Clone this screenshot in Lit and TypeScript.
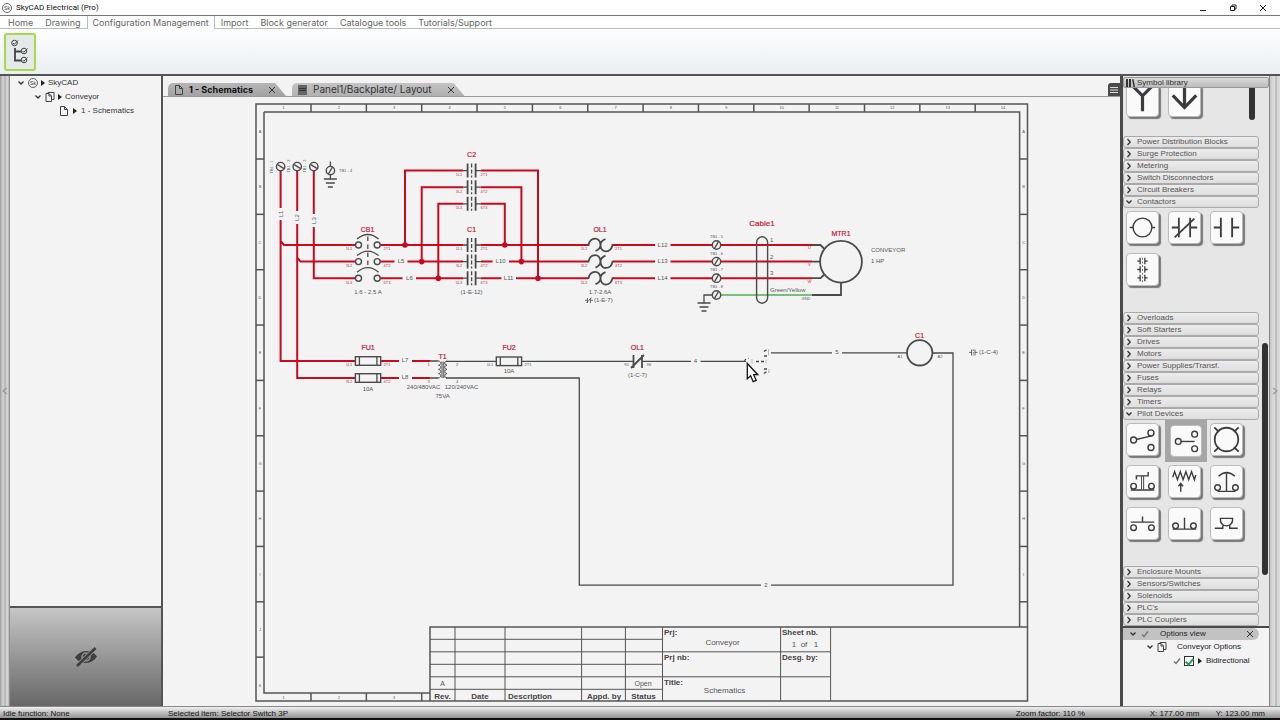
import { LitElement, html, css, svg } from "lit";
import { customElement, state } from "lit/decorators.js";
import { classMap } from "lit/directives/class-map.js";

type Pt = { x: number; y: number };

const txt = (x: number, y: number, s: string, cls = "", anchor = "middle") =>
  svg`<text x=${x} y=${y} class=${cls} text-anchor=${anchor}>${s}</text>`;
const vtxt = (x: number, y: number, s: string, cls = "") =>
  svg`<text x=${x} y=${y} class=${cls} text-anchor="middle" transform=${`rotate(-90 ${x} ${y})`}>${s}</text>`;
const wire = (d: string) => svg`<path class="wire" d=${d} />`;
const ink = (d: string) => svg`<path class="ink" d=${d} />`;
const node = (x: number, y: number) => svg`<circle class="node" cx=${x} cy=${y} r="2.8" />`;

const POLES = [245, 261.6, 278.2];
const COLS = Array.from({ length: 13 }, (_, i) => 311 + i * 55.35);
const ROWS = Array.from({ length: 10 }, (_, i) => 159 + i * 55.35);

const terminal = (p: Pt, flat = false) => svg`
  <circle class="part" cx=${p.x} cy=${p.y} r="4.2" />
  <path class="ink" d=${flat ? `M${p.x - 3} ${p.y - 2}L${p.x + 3.4} ${p.y + 2}` : `M${p.x - 2} ${p.y + 3.4}L${p.x + 2} ${p.y - 3.4}`} />`;

const ground = (x: number, y: number) =>
  ink(`M${x - 6.5} ${y}h13M${x - 4.5} ${y + 4}h9M${x - 2.5} ${y + 8}h5`);

const contact = (y: number, n: number) => svg`
  ${ink(`M463 ${y}h5M476 ${y}h5`)}
  <path class="plate" d=${`M467.6 ${y - 7}v14M475.6 ${y - 7}v14`} />
  <path class="ink" stroke-dasharray="4 2" d=${`M471.6 ${y - 7}v14`} />
  ${txt(459, y + 5.4, `${n * 2 - 1}L${n}`, "pin redpin")}
  ${txt(484, y + 5.4, `${n * 2}T${n}`, "pin redpin")}`;

const overload = (y: number, n: number) => svg`
  <path class="plate" d=${`M587.5 ${y}h1C590 ${y - 8} 600.3 ${y - 9} 600.5 ${y}C600.5 ${y + 3} 598 ${y + 5} 595.5 ${y + 6}M613.5 ${y}h-1C611 ${y + 8} 600.7 ${y + 9} 600.5 ${y}C600.5 ${y - 3} 603 ${y - 5} 605.5 ${y - 6}`} />
  ${txt(584, y + 5.4, `${n * 2 - 1}L${n}`, "pin redpin")}
  ${txt(618.5, y + 5.4, `${n * 2}T${n}`, "pin redpin")}`;

const fuse = (x: number, y: number) => svg`
  <rect class="part" x=${x} y=${y - 4.3} width="25.3" height="8.6" />
  ${ink(`M${x + 4} ${y - 4}v8M${x + 21.5} ${y - 4}v8`)}`;

const frame = svg`
  <path class="frame" d="M256 104H1027.5V701H256ZM264 112H1019.6V627M264 112V693H430" />
  ${COLS.map((x) => svg`<path class="frame" d=${`M${x} 104v8`} />`)}
  ${COLS.slice(0, 3).map((x) => svg`<path class="frame" d=${`M${x} 693v8`} />`)}
  ${ROWS.map((y) => svg`<path class="frame" d=${`M256 ${y}h8`} />`)}
  ${ROWS.slice(0, 9).map((y) => svg`<path class="frame" d=${`M1019.6 ${y}h8`} />`)}
  ${Array.from({ length: 14 }, (_, i) => txt(283.5 + i * 55.35, 109.4, String(i + 1), "grid"))}
  ${Array.from({ length: 3 }, (_, i) => txt(283.5 + i * 55.35, 698.6, String(i + 1), "grid"))}
  ${Array.from("ABCDEFGHIJK").map((c, i) => txt(260, 133 + i * 55.35, c, "grid"))}
  ${Array.from("ABCDEFGHI").map((c, i) => txt(1023.6, 133 + i * 55.35, c, "grid"))}`;

const titleBlock = svg`
  <path class="frame" d="M430 701V627H1027.5" />
  <path class="rule" d="M430 639.3H662.5M430 664.3H662.5M430 689.3H662.5M430 651.8H830.5M430 676.8H830.5M455 627V701M505 627V701M581.6 627V701M625.4 627V701M662.5 627V701M780.6 627V701M830.6 627V701" />
  ${txt(442.5, 686, "A", "cell")} ${txt(643, 686, "Open", "cell")}
  ${txt(442.5, 699, "Rev.", "label")} ${txt(480, 699, "Date", "label")}
  ${txt(508, 699, "Description", "label", "start")} ${txt(604, 699, "Appd. by", "label")}
  ${txt(643.5, 699, "Status", "label")}
  ${txt(664, 635, "Prj:", "label", "start")} ${txt(722.5, 645, "Conveyor", "cellL")}
  ${txt(664, 660, "Prj nb:", "label", "start")}
  ${txt(664, 685, "Title:", "label", "start")} ${txt(724.5, 693, "Schematics", "cellL")}
  ${txt(782, 635, "Sheet nb.", "label", "start")} 
  ${txt(794, 647, "1", "cellL")}${txt(804, 647, "of", "cellL")}${txt(816, 647, "1", "cellL")}
  ${txt(782, 660, "Desg. by:", "label", "start")}`;

const power = svg`
  ${wire("M280.6 171V208M280.6 220V361H355M280.6 241L284 245H355")}
  ${wire("M297.2 171V211M297.2 224V378H355M297.2 257.6L300.6 261.6H355")}
  ${wire("M313.8 171V214M313.8 227V278.2H355")}
  ${[280.6, 297.2, 313.8].map((x) => terminal({ x, y: 166.6 }, true))}
  ${vtxt(273, 167, "TB1 - 1", "pin")} ${vtxt(289.6, 166, "TB1 - 2", "pin")} ${vtxt(306.2, 166, "TB1 - 3", "pin")}
  ${vtxt(282.5, 214, "L1", "lbl")} ${vtxt(299, 217.6, "L2", "lbl")} ${vtxt(315.6, 220.6, "L3", "lbl")}
  ${ink("M330.4 161.5v18")} ${terminal({ x: 330.4, y: 170.6 })} ${ground(330.4, 179)}
  ${txt(339, 172, "TB1 - 4", "pin", "start")}

  ${wire("M380 245H463M380 261.6H394.5M407.5 261.6H463M380 278.2H402.5M416 278.2H463")}
  ${POLES.map((y, i) => svg`
    <circle class="part" cx="358.5" cy=${y} r="3" /><circle class="part" cx="377.2" cy=${y} r="3" />
    ${ink(`M357 ${y - 6}Q367.8 ${y - 15} 378.6 ${y - 6}`)}
    ${txt(349, y + 5.4, `${i * 2 + 1}L${i + 1}`, "pin redpin")}${txt(387, y + 5.4, `${i * 2 + 2}T${i + 1}`, "pin redpin")}`)}
  <path class="ink" stroke-dasharray="4.5 3.5" d="M367.8 236.5V268" />
  ${txt(367.6, 232, "CB1", "tag")} ${txt(368, 294, "1.6 - 2.5 A", "note")}
  ${txt(401, 263.4, "L5", "lbl")} ${txt(409.4, 280, "L6", "lbl")}

  ${wire("M405 245V170.6H463M421.7 261.6V187.2H463M438.3 278.2V203.8H463")}
  ${wire("M481 170.6H538V278.2M481 187.2H521.4V261.6M481 203.8H504.8V245")}
  ${node(405, 245)} ${node(421.7, 261.6)} ${node(438.3, 278.2)}
  ${node(504.8, 245)} ${node(521.4, 261.6)} ${node(538, 278.2)}
  ${wire("M481 245H588M481 261.6H492.6M509 261.6H588M481 278.2H501.4M516 278.2H588")}
  ${[170.6, 187.2, 203.8].map((y, i) => contact(y, i + 1))}
  ${POLES.map((y, i) => contact(y, i + 1))}
  ${txt(471.6, 157.4, "C2", "tag")} ${txt(471.6, 232, "C1", "tag")} ${txt(471.6, 294, "(1-E-12)", "note")}
  ${txt(500.6, 263.4, "L10", "lbl")} ${txt(508.6, 280, "L11", "lbl")}

  ${POLES.map((y, i) => overload(y, i + 1))}
  ${txt(600, 232, "OL1", "tag")} ${txt(600, 294, "1.7-2.6A", "note")} ${txt(594, 302.4, "(1-E-7)", "note", "start")}
  <path class="thin" d="M585 300.3h2.500M587.500 298v5M590.500 298v5M586.500 303L591.500 297.600M590.500 300.300h2.500" />

  ${POLES.map((y, i) => svg`
    ${wire(`M613 ${y}H655M670.5 ${y}H712M721 ${y}H812`)}
    ${txt(662.6, y + 1.6, `L1${i + 2}`, "lbl")}
    ${txt(770, y - 3, String(i + 1), "lbl", "start")}
    ${txt(809.4, y + 4.4, "UVW"[i], "pin redpin")}`)}
  <path class="earth" d="M721 295H812" />
  ${[...POLES, 295].map((y, i) => svg`${terminal({ x: 716.5, y })}${txt(716.5, y - 7, `TB1 - ${i + 5}`, "pin")}`)}
  ${ink("M712 295H704V303")} ${ground(704, 303)}
  <rect class="part open" x="756.6" y="236.8" width="11" height="66.4" rx="5.5" />
  ${txt(762, 226, "Cable1", "tagL")} ${txt(770, 292, "Green/Yellow", "lbl", "start")} ${txt(806, 299.6, "GND", "pin")}
  <path class="plate" d="M812 245H820.5L825 249.5M812 261.6H820M812 278.2H820.5L825 274M812 295H841V283" />
  <circle class="part heavy" cx="841" cy="261.7" r="20.9" />
  ${txt(841, 236, "MTR1", "tag")}
  ${txt(871, 252.4, "CONVEYOR", "note", "start")} ${txt(871, 263, "1 HP", "note", "start")}`;

const control = svg`
  ${fuse(355.4, 361)} ${fuse(355.4, 378)}
  ${wire("M381 361H399M412 361H430M381 378H399M412 378H430")}
  ${txt(368, 350, "FU1", "tag")} ${txt(368, 391.4, "10A", "note")}
  ${txt(405, 362.4, "L7", "lbl")} ${txt(405, 379.2, "L8", "lbl")}
  ${txt(349, 366.4, "1L1", "pin redpin")}${txt(387, 366.4, "2T1", "pin redpin")}
  ${txt(349, 383.4, "3L2", "pin redpin")}${txt(387, 383.4, "4T2", "pin redpin")}
  ${ink("M430 361H438.500M430 378H438.500")}
  <path class="coil" d="M438.500 361c3 .5 3 3.700 0 4.200c3 .5 3 3.700 0 4.200c3 .5 3 3.700 0 4.200c3 .5 3 3.900 0 4.400M447 361c-3 .5-3 3.700 0 4.200c-3 .5-3 3.700 0 4.200c-3 .5-3 3.700 0 4.200c-3 .5-3 3.900 0 4.400M442 361.500V378M443.800 361.500V378" />
  ${txt(442.6, 358.6, "T1", "tag")}
  ${txt(428.5, 366.4, "1", "pin redpin")}${txt(428.5, 383.4, "3", "pin redpin")}${txt(457, 366.4, "2", "pin")}${txt(457, 383.4, "4", "pin")}
  ${txt(423.5, 389.4, "240/480VAC", "note")} ${txt(461.5, 389.4, "120/240VAC", "note")} ${txt(442.6, 398, "75VA", "note")}
  ${ink("M446 361.300H496M521.500 361.300H633M642 361.300H691M700.500 361.300H746")}
  ${fuse(496.3, 361.3)} ${txt(509, 350, "FU2", "tag")} ${txt(509, 373, "10A", "note")}
  ${txt(490, 366.4, "1L1", "pin")}${txt(528, 366.4, "2T1", "pin")}
  <path class="plate" d="M633.500 355V368M642 355V368M631 368L644 355" />
  ${txt(637.4, 350, "OL1", "tag")} ${txt(637.4, 377, "(1-C-7)", "note")}
  ${txt(626.5, 366.4, "95", "pin")}${txt(649, 366.4, "96", "pin")}
  ${txt(695.5, 362.6, "4", "lbl")} ${txt(837, 354.4, "5", "lbl")} ${txt(766, 586.8, "2", "lbl")}
  ${ink("M446 378H579.300V585.200H761M771 585.200H953V353H932M771 352.800H832M842 352.800H907")}
  <circle class="part heavy" cx="919.7" cy="352.800" r="12.700" />
  ${txt(919.6, 338, "C1", "tag")} ${txt(900, 358, "A1", "pin")}${txt(940, 358, "A2", "pin")}
  <path class="thin" d="M969 352.400h2.500M971.500 349.500v6M975 349.500v6M975 352.400h2.500" />
  <path class="thin" stroke-dasharray="1.5 1" d="M973.300 349.500v6" />
  ${txt(979, 354.4, "(1-C-4)", "note", "start")}
  <path class="ink" stroke-dasharray="3 2" d="M744.500 361.500q.5-3 4-3M756 361.500h10M764 351.500q2-2 5-1.500M764 356h5M764 369h5M764 373.500q2-2 5-1.500" />
  <path class="ghost" d="M752 359v5M768.500 350.500v5M766 359.500v4M769 369v4" />`;

const cursor = svg`<path d="M747.300 363.500V378.800L750.600 375.800L753.200 381.700L756.200 380.400L753.700 374.700H757.800Z" fill="#fff" stroke="#111" stroke-width="1.300" />`;

const SYMBOLS: Record<string, unknown> = {
  fork: svg`<path stroke-width="3.400" d="M5 0L16.500 11.500L28 0M16.500 11V28" />`,
  arrow: svg`<path stroke-width="3.400" d="M16.500 3V25M4 11L16.500 24L29 11" />`,
  coil: svg`<circle cx="16.500" cy="16.500" r="10" /><path d="M3 16.500h3.500M26.500 16.500h3.500" />`,
  nc: svg`<path d="M3 16.500h7.500M22.500 16.500h7.500M10.500 6v21M22.500 6v21" stroke-width="1.900" /><path d="M6 27L27 7" stroke-width="1.900" />`,
  no: svg`<path d="M3 16.500h7.500M22.500 16.500h7.500M10.500 6v21M22.500 6v21" stroke-width="2" />`,
  pole3: svg`<path d="M11 7.500h3.500M18.500 7.500h3.500M11 16.500h3.500M18.500 16.500h3.500M11 25.500h3.500M18.500 25.500h3.500M14 4v7M19 4v7M14 13v7M19 13v7M14 22v7M19 22v7" stroke-width="1.400" /><path d="M16.500 4v26" stroke-width=".8" stroke-dasharray="2 2" />`,
  sel2: svg`<circle cx="7" cy="17" r="3.200" /><circle cx="25.500" cy="9.500" r="3.200" /><circle cx="25.500" cy="25" r="3.200" /><path d="M10 16.500L26 12.700" />`,
  sel3: svg`<circle cx="8" cy="17" r="3.200" /><circle cx="26" cy="9" r="3.200" /><circle cx="26" cy="25" r="3.200" /><path d="M11 17h15" />`,
  pilot: svg`<circle cx="16.500" cy="16.500" r="12.500" stroke-width="1.900" /><path stroke-width="1.900" d="M3.500 3.500l5 5M29.500 3.500l-5 5M3.500 29.500l5-5M29.500 29.500l-5-5" />`,
  plug: svg`<circle cx="7" cy="21.500" r="3" /><circle cx="26" cy="21.500" r="3" /><path d="M4 25.500h25M10 14.500v-4h12.500V6.500" /><path d="M15.500 25V10.500M17.700 25V10.500" stroke-width="1" />`,
  resistor: svg`<path d="M4 12l2-6 3 8.500 3-8.500 3 8.500 3-8.500 3 8.500 3-8.500 3 8.500 1.500-5M12.500 27.500V19M10 21.500l2.500-3 2.500 3" />`,
  mushroom: svg`<circle cx="7" cy="23" r="3" /><circle cx="26" cy="23" r="3" /><path d="M7 27h19M16.500 27V7M8 11Q16.500 3 25.500 11" />`,
  pushno: svg`<circle cx="7" cy="21" r="3" /><circle cx="26" cy="21" r="3" /><path d="M4 15h25M16.500 15V9" />`,
  pushnc: svg`<circle cx="7" cy="19" r="3" /><circle cx="26" cy="19" r="3" /><path d="M4 22.500h25M16.500 22V10.500" />`,
  horn: svg`<path d="M4 21.500h8.500v-3M28.500 21.500H20v-3M10 11h13q.5 7.500-6.500 8q-7-.5-6.500-8z" />`,
};

interface Group { name: string; items?: string[] }
const GROUPS: Group[] = [
  { name: "Power Distribution Blocks" }, { name: "Surge Protection" }, { name: "Metering" },
  { name: "Switch Disconnectors" }, { name: "Circuit Breakers" },
  { name: "Contactors", items: ["coil", "nc", "no", "pole3"] },
  { name: "Overloads" }, { name: "Soft Starters" }, { name: "Drives" }, { name: "Motors" },
  { name: "Power Supplies/Transf." }, { name: "Fuses" }, { name: "Relays" }, { name: "Timers" },
  { name: "Pilot Devices", items: ["sel2", "sel3", "pilot", "plug", "resistor", "mushroom", "pushno", "pushnc", "horn"] },
  { name: "Enclosure Mounts" }, { name: "Sensors/Switches" }, { name: "Solenoids" },
  { name: "PLC's" }, { name: "PLC Couplers" },
];

const chevron = (open: boolean) => html`<svg class="ico8" viewBox="0 0 8 8">
  <path d=${open ? "M1.500 2.500L4 5L6.500 2.500" : "M2.500 1L5.200 4L2.500 7"} fill="none" stroke="#333" stroke-width="1.300" /></svg>`;
const caret = html`<svg class="ico4" viewBox="0 0 4 8"><path d="M0 1L4 4L0 7Z" fill="#222" /></svg>`;
const page = html`<svg class="ico10" viewBox="0 0 10 10"><path d="M1.500 .5H5.500L8.500 3.500V9.500H1.500ZM5.500 .5V3.500H8.500" fill="none" stroke="#444" /></svg>`;
const pages = html`<svg class="ico10" viewBox="0 0 10 10"><path d="M3 1.500V.5H9V7.500H7M1 1.500H4L6.500 4V9.500H1ZM4 1.500V4H6.500" fill="none" stroke="#444" /></svg>`;
const logo = html`<svg class="ico10" viewBox="0 0 10 10"><circle cx="5" cy="5" r="4.500" fill="none" stroke="#555" stroke-width=".9" /><text x="5" y="6.800" text-anchor="middle" font-size="5" font-family="Liberation Sans, sans-serif" fill="#333">Sk</text></svg>`;
const cross = html`<svg class="ico8" viewBox="0 0 8 8"><path d="M1 1L7 7M7 1L1 7" stroke="#333" fill="none" /></svg>`;
const tick = html`<svg class="ico8" viewBox="0 0 8 8"><path d="M1 4.500L3 6.500L7 1.500" stroke="#777" stroke-width="1.500" fill="none" /></svg>`;

@customElement("app-root")
export class AppRoot extends LitElement {
  @state() private ribbon = "Configuration Management";
  @state() private picked = "sel3";
  @state() private bidirectional = true;

  static styles = css`
    :host { display: flex; flex-direction: column; height: 100vh; overflow: hidden; background: #f3f3f3;
      font: 8px/12px "Liberation Sans", Arial, sans-serif; color: #222; }
    * { box-sizing: border-box; }
    button { font: inherit; color: inherit; border: 0; background: none; padding: 0; margin: 0; text-align: left; }
    svg { display: block; flex: none; }
    .ico8 { width: 8px; height: 8px; }
    .ico4 { width: 4px; height: 8px; }
    .ico10 { width: 10px; height: 10px; }

    .title { display: flex; align-items: center; gap: 4px; height: 15px; padding: 0 2px; background: #fff; font-family: Roboto, "Noto Sans", sans-serif; }
    .title h1 { flex: 1; margin: 0; font: inherit; color: #111; }
    .winbtns { display: flex; gap: 20px; padding-right: 10px; }
    .winbtns svg { width: 10px; height: 10px; }

    .menu { display: flex; height: 14px; border-top: 1px solid #777; background: #fff; border-bottom: 1px solid #bbb;
      font: 9px/13px Inter, "Liberation Sans", sans-serif; color: #666; padding-left: 2px; }
    .menu button { padding: 0 5px; height: 13px; border: solid transparent; border-width: 0 1px; white-space: nowrap; }
    .menu .on { border-color: #bbb; background: #fdfdfd; }
    .ribbon { flex: none; height: 47px; padding: 4px; background: linear-gradient(#fdfefe, #eaeff3); border-bottom: 2px solid #555; }
    .config { display: grid; place-items: center; width: 32px; height: 38px; border: 2px solid #a9d84a; border-radius: 3px; background: #e4e9ea; }
    .config svg { width: 18px; height: 26px; }

    .work { flex: 1; min-height: 0; display: flex; }
    .rail { flex: none; width: 10px; display: grid; place-items: center; background: linear-gradient(90deg, #9a9a9a, #c8c8c8 2px, #d2d2d2 4px, #a4a4a4 5px, #cdcdcd 6px, #d6d6d6 8px, #777 10px); }
    .rail.end { background: linear-gradient(90deg, #c4c4c4, #dadada 3px, #dadada 5px, #a4a4a4 6px, #d6d6d6 7px, #dcdcdc); }
    .rail svg { width: 6px; height: 8px; }

    .left { flex: none; width: 153px; display: flex; flex-direction: column; border-right: 2px solid #555; background: #f3f3f3; }
    .tree { flex: 1; list-style: none; margin: 0; padding: 0 0 0 7px; color: #333; }
    .tree li { height: 14px; }
    .row { display: flex; align-items: center; gap: 3px; height: 14px; }
    .kids { list-style: none; margin: 0; padding-left: 17px; }
    .kids .kids { padding-left: 25px; }
    .row.leaf { gap: 4px; }
    .preview { height: 100px; border-top: 2px solid #555; background: linear-gradient(#c6c6c6, #676767); display: grid; place-items: center; }
    .preview svg { width: 24px; height: 22px; }

    .center { flex: 1; min-width: 0; display: flex; flex-direction: column; }
    .docs { flex: none; display: flex; align-items: flex-end; gap: 6px; height: 21px; padding-left: 5px; border-bottom: 1px solid #999; }
    .doc { display: flex; align-items: center; height: 13px; padding: 0 10px 0 6px; gap: 5px; white-space: nowrap;
      font: 10px/13px Inter, "Liberation Sans", sans-serif; color: #333;
      background: linear-gradient(#c4c4c4, #b0b0b0); border-radius: 5px 0 0 0; clip-path: polygon(0 0, calc(100% - 11px) 0, 100% 100%, 0 100%); }
    .doc button { margin-left: 10px; }
    .doc.on { font: 700 9px/13px Inter, "Liberation Sans", sans-serif; color: #111; background: linear-gradient(#b6b6b6, #a2a2a2); }
    .spacer { flex: 1; }
    .burger { width: 12px; height: 13px; background: #4a4a4a; border-radius: 3px 0 0 0; display: grid; place-items: center; }
    .burger svg { width: 8px; height: 8px; }
    .sheet { flex: 1; min-height: 0; width: 100%; background: #f3f3f3; }

    .sheet text { font-family: "Liberation Sans", Arial, sans-serif; fill: #555; }
    .sheet .grid { font-size: 4px; }
    .sheet .pin { font-size: 4px; }
    .sheet .redpin { fill: #a83a48; }
    .sheet .lbl { font-size: 6px; }
    .sheet .note { font-size: 6px; }
    .sheet .tag { font-size: 7px; fill: #c41a34; stroke: #c41a34; stroke-width: .2px; }
    .sheet .tagL { font-size: 8px; fill: #c41a34; stroke: #c41a34; stroke-width: .2px; }
    .sheet .cell { font-size: 7px; }
    .sheet .cellL { font-size: 8px; }
    .sheet .label { font-size: 8px; font-weight: 700; fill: #444; }
    .frame { fill: none; stroke: #555; stroke-width: 1.5; }
    .rule { fill: none; stroke: #555; stroke-width: 1; }
    .wire { fill: none; stroke: #c80a20; stroke-width: 2; }
    .earth { fill: none; stroke: #4caf50; stroke-width: 1.6; }
    .node { fill: #c80a20; }
    .ink { fill: none; stroke: #4a4a4a; stroke-width: 1.3; }
    .coil { fill: none; stroke: #4a4a4a; stroke-width: 1; }
    .thin { fill: none; stroke: #4a4a4a; stroke-width: .8; }
    .ghost { fill: none; stroke: #bbb; stroke-width: 1; }
    .plate { fill: none; stroke: #4a4a4a; stroke-width: 1.8; }
    .part { fill: #f3f3f3; stroke: #4a4a4a; stroke-width: 1.4; }
    .open { fill: none; }
    .heavy { stroke-width: 1.8; }

    .right { flex: none; width: 150px; display: flex; flex-direction: column; border-left: 3px solid #4a4a4a; border-right: 1px solid #888; background: #e6e6e6; }
    .lib { flex: 1; min-height: 0; display: flex; flex-direction: column; padding-top: 1px; }
    .lib h2 { display: flex; align-items: center; gap: 2px; flex: none; margin: 0; height: 11px; padding-left: 1px; font: inherit; color: #333;
      background: linear-gradient(#dadada, #bdbdbd); border: 1px solid #999; border-radius: 2px; }
    .scroll { flex: 1; min-height: 0; display: flex; }
    .groups { flex: 1; overflow: hidden; display: flex; flex-direction: column; justify-content: flex-end; }
    .head { flex: none; display: flex; align-items: center; gap: 4px; width: 100%; height: 12px; padding-left: 1px; color: #555;
      border: 1px solid #aaa; border-radius: 3px; background: linear-gradient(#ececec, #dedede); }
    .tiles { flex: none; display: grid; grid-template-columns: repeat(3, 42px); padding-bottom: 20px; }
    .first { display: flex; justify-content: space-between; padding: 0 4px 13px 0; }
    .first .tiles { padding: 0; grid-template-columns: repeat(2, 42px); }
    .slot { height: 42px; display: flex; padding: 3px 0 0 3px; }
    .slot.on { background: #a6a6a6; padding: 5px; }
    .slot.on .tile { box-shadow: none; width: 32px; height: 32px; }
    .tile { width: 33px; height: 33px; border: 1px solid #bbb; border-radius: 4px; background: #fafafa; box-shadow: 2px 2px 1px #777; }
    .tile svg { width: 100%; height: 100%; fill: none; stroke: #3c3c3c; stroke-width: 1.5; }
    .mini { width: 6px; background: #333; border-radius: 3px; margin-bottom: 3px; }
    .track { flex: none; width: 10px; padding: 255px 1px 51px 3px; }
    .thumb { height: 100%; background: #333; border-radius: 3px; }
    .options { flex: none; height: 80px; border-top: 2px solid #4a4a4a; background: #f3f3f3; color: #222; }
    .optbar { display: flex; align-items: center; gap: 4px; height: 12px; width: 136px; padding: 0 5px 0 6px; border-radius: 0 6px 6px 0; background: #c2c2c2; }
    .optbar span { flex: 1; padding-left: 7px; }
    .optrow { display: flex; align-items: center; gap: 3px; height: 14px; padding-left: 23px; }
    .optrow span { padding-left: 7px; }
    .optrow.deep { padding-left: 50px; }
    .optrow label { display: flex; align-items: center; gap: 4px; }
    input { appearance: none; width: 10px; height: 10px; margin: 0; border: 1px solid #333; background: #fff; display: grid; place-items: center; }
    input:checked::after { content: ""; width: 3px; height: 6px; margin-bottom: 2px; border: solid #1fa04a; border-width: 0 2px 2px 0; transform: rotate(40deg); }

    .status { flex: none; display: flex; height: 14px; line-height: 13px; padding: 0 15px 0 3px; border-top: 1px solid #888; border-bottom: 2px solid #111;
      background: linear-gradient(#f0f0f0, #929292); color: #111; }
    .status span:nth-child(1) { width: 165px; }
    .status span:nth-child(2) { flex: 1; }
    .status span:nth-child(3) { width: 134px; }
    .status span:nth-child(4) { width: 66px; }
  `;

  private tile(id: string) {
    return html`<div class=${classMap({ slot: true, on: id === this.picked })}>
      <button class="tile" aria-label=${id} @click=${() => (this.picked = id)}><svg viewBox="0 0 33 33">${SYMBOLS[id]}</svg></button>
    </div>`;
  }

  render() {
    const menus = ["Home", "Drawing", "Configuration Management", "Import", "Block generator", "Catalogue tools", "Tutorials/Support"];
    return html`
      <header class="title">${logo}<h1>SkyCAD Electrical (Pro)</h1>
        <div class="winbtns">
          <button aria-label="Minimize"><svg viewBox="0 0 10 10"><path d="M2 7.500h6" stroke="#222" /></svg></button>
          <button aria-label="Restore"><svg viewBox="0 0 10 10"><path d="M2.500 3.500h4v4h-4zM4 3.500v-1.500h4v4h-1.500" stroke="#222" fill="none" /></svg></button>
          <button aria-label="Close"><svg viewBox="0 0 10 10"><path d="M2 2l6 6M8 2l-6 6" stroke="#222" /></svg></button>
        </div>
      </header>
      <nav class="menu">${menus.map((m) => html`<button class=${classMap({ on: m === this.ribbon })} @click=${() => (this.ribbon = m)}>${m}</button>`)}</nav>
      <div class="ribbon"><button class="config" aria-label="Configuration tree"><svg viewBox="1 0 18 26">
        <g fill="none" stroke="#444"><circle cx="4.500" cy="4" r="2.800" /><circle cx="14" cy="12" r="2.800" /><circle cx="14" cy="21" r="2.800" />
        <path d="M3 4l1.300 1.300L8 1.500M12.500 12l1.300 1.300L17.500 9.500M12.500 21l1.300 1.300L17.500 18.500" />
        <path d="M5 9V21.500H11M5 12.500H11" stroke-width="1.800" /></g></svg></button></div>

      <main class="work">
        <div class="rail"><svg viewBox="0 0 6 8"><path d="M5 1L1 4L5 7" fill="none" stroke="#999" stroke-width="1.300" /></svg></div>
        <aside class="left">
          <ul class="tree">
            <li><div class="row">${chevron(true)}${logo}${caret}<span>SkyCAD</span></div>
              <ul class="kids"><li><div class="row">${chevron(true)}${pages}${caret}<span>Conveyor</span></div>
                <ul class="kids"><li><div class="row leaf">${page}${caret}<span>1 - Schematics</span></div></li></ul>
              </li></ul>
            </li>
          </ul>
          <div class="preview"><svg viewBox="0 0 24 22"><path d="M1 11.500Q5 5.500 12 5Q19 5 23 10.500Q19 16.500 12 17Q5 17 1 11.500Z" fill="#3e3e3e" />
            <circle cx="12" cy="11" r="4" fill="none" stroke="#949494" stroke-width="1.500" /><path d="M5 18L20 3.500" stroke="#949494" stroke-width="4.500" /><path d="M3 20L21.500 2" stroke="#3e3e3e" stroke-width="2.600" /></svg></div>
        </aside>

        <section class="center">
          <div class="docs">
            <div class="doc on">${page}<span>1 - Schematics</span><button aria-label="Close 1 - Schematics">${cross}</button></div>
            <div class="doc"><svg class="ico10" viewBox="0 0 10 10"><path d="M0 0H9V10H0Z" fill="#666" /><path d="M1 3.500H8M1 5.500H8" stroke="#333" /></svg>
              <span>Panel1/Backplate/ Layout</span><button aria-label="Close Panel1">${cross}</button></div>
            <span class="spacer"></span>
            <button class="burger" aria-label="Sheet list"><svg viewBox="0 0 8 8"><path d="M0 1.500H8M0 4H8M0 6.500H8" stroke="#ddd" /></svg></button>
          </div>
          <svg class="sheet" viewBox="163 97 957 609" preserveAspectRatio="xMidYMin meet">${frame}${titleBlock}${power}${control}${cursor}</svg>
        </section>

        <aside class="right">
          <section class="lib">
            <h2><svg class="ico10" viewBox="0 0 10 10"><path d="M1 1H3V9H1ZM4 1H6V9H4ZM7 1.500L8.500 1L10 9H8.500Z" fill="#333" /></svg>Symbol library</h2>
            <div class="scroll">
              <div class="groups">
                <div class="first"><div class="tiles">${this.tile("fork")}${this.tile("arrow")}</div><div class="mini"></div></div>
                ${GROUPS.map((g) => html`<button class="head">${chevron(!!g.items)}${g.name}</button>
                  ${g.items ? html`<div class="tiles">${g.items.map((id) => this.tile(id))}</div>` : null}`)}
              </div>
              <div class="track"><div class="thumb"></div></div>
            </div>
          </section>
          <section class="options">
            <div class="optbar">${chevron(true)}${tick}<span>Options view</span><button aria-label="Close options">${cross}</button></div>
            <div class="optrow">${chevron(true)}${pages}<span>Conveyor Options</span></div>
            <div class="optrow deep">${tick}<label><input type="checkbox" .checked=${this.bidirectional} @change=${(e: Event) => (this.bidirectional = (e.target as HTMLInputElement).checked)} />${caret}Bidirectional</label></div>
          </section>
        </aside>
        <div class="rail end"><svg viewBox="0 0 6 8"><path d="M1 1L5 4L1 7" fill="none" stroke="#999" stroke-width="1.300" /></svg></div>
      </main>

      <footer class="status"><span>Idle function: None</span><span>Selected item: Selector Switch 3P</span><span>Zoom factor: 110 %</span><span>X: 177.00 mm</span><span>Y: 123.00 mm</span></footer>`;
  }
}
